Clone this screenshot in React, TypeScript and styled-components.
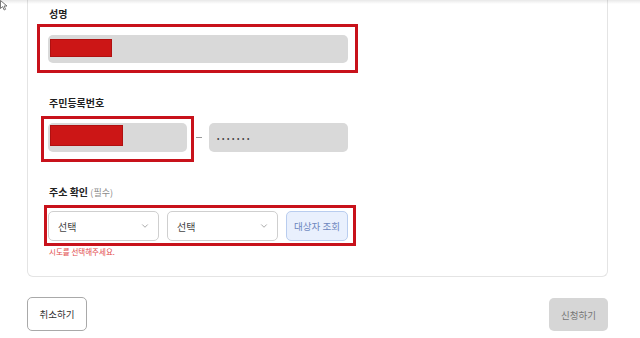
import styled, { createGlobalStyle } from "styled-components";
import { ChevronDown } from "lucide-react";

const GlobalStyle = createGlobalStyle`
  body {
    margin: 0;
    background: #fff;
    font-family: "Noto Sans CJK KR", "Noto Sans", sans-serif;
    color: #222;
  }
`;

const Page = styled.div`
  position: relative;
  width: 640px;
  height: 338px;
  overflow: hidden;
  padding: 0 32px 0 27px;
  box-sizing: border-box;
`;

const TopShade = styled.div`
  position: absolute;
  top: 0;
  left: 0;
  right: 0;
  height: 4px;
  background: linear-gradient(rgba(0, 0, 0, 0.09), rgba(0, 0, 0, 0));
`;

const Cursor = styled.svg`
  position: absolute;
  top: 0;
  left: 0;
`;

const Card = styled.section`
  border: 1px solid #e4e4e4;
  border-top: none;
  border-radius: 0 0 6px 6px;
  padding: 7px 20px 19px 20px;
`;

const Label = styled.div`
  font-size: 10px;
  font-weight: 700;
  line-height: 14px;
  padding-left: 1px;
  color: #222;
  span {
    font-weight: 400;
    font-size: 9px;
    color: #8a8a8a;
  }
`;

const Highlight = styled.div<{ $pad: string; $ml: number; $mt: number }>`
  display: flex;
  border: 3px solid #c8121b;
  padding: ${(p) => p.$pad};
  margin-left: ${(p) => p.$ml}px;
  margin-top: ${(p) => p.$mt}px;
  gap: 8px;
  width: fit-content;
`;

const GrayInput = styled.div<{ $w: number; $h: number }>`
  width: ${(p) => p.$w}px;
  height: ${(p) => p.$h}px;
  background: #d9d9d9;
  border-radius: 5px;
  display: flex;
  align-items: flex-start;
  padding-left: 2px;
  box-sizing: border-box;
  flex-shrink: 0;
`;

const Redact = styled.div<{ $w: number; $h: number; $t: number }>`
  width: ${(p) => p.$w}px;
  height: ${(p) => p.$h}px;
  margin-top: ${(p) => p.$t}px;
  background: #cc1616;
  box-shadow: inset 0 0 0 1px #b01010;
`;

const Row = styled.div`
  display: flex;
  align-items: flex-start;
  margin-top: 6px;
`;

const Dash = styled.div`
  width: 15px;
  height: 1px;
  margin-top: 21px;
  display: flex;
  &::before {
    content: "";
    margin-left: 2px;
    width: 6px;
    height: 1px;
    background: #999;
  }
`;

const Masked = styled(GrayInput)`
  margin-top: 7px;
  align-items: center;
  padding-left: 8px;
  font-size: 7px;
  letter-spacing: 2.6px;
  color: #444;
`;

const Select = styled.div`
  width: 111px;
  height: 30px;
  box-sizing: border-box;
  border: 1px solid #cfcfcf;
  border-radius: 5px;
  background: #fff;
  display: flex;
  align-items: center;
  justify-content: space-between;
  padding: 0 8px 0 9px;
  font-size: 10px;
  color: #444;
`;

const LookupButton = styled.button`
  width: 62px;
  height: 30px;
  box-sizing: border-box;
  border: 1px solid #b9cdef;
  border-radius: 5px;
  background: #e9f0fd;
  color: #6d87bd;
  font-family: inherit;
  font-size: 9.5px;
  padding: 0;
`;

const ErrorText = styled.div`
  margin-top: 1px;
  padding-left: 1px;
  font-size: 7.5px;
  line-height: 10px;
  color: #e24a4a;
`;

const Actions = styled.div`
  display: flex;
  justify-content: space-between;
  align-items: center;
  margin-top: 20px;
`;

const ActionButton = styled.button<{ $primary?: boolean }>`
  height: ${(p) => (p.$primary ? 33 : 34)}px;
  width: ${(p) => (p.$primary ? 59 : 60)}px;
  box-sizing: border-box;
  border-radius: 5px;
  border: ${(p) => (p.$primary ? "none" : "1px solid #a9a9a9")};
  background: ${(p) => (p.$primary ? "#d6d6d6" : "#fff")};
  color: ${(p) => (p.$primary ? "#777" : "#333")};
  font-family: inherit;
  font-size: 9.5px;
  padding: 0;
  margin-top: ${(p) => (p.$primary ? 1 : 0)}px;
`;

const Spacer = styled.div<{ $h: number }>`
  height: ${(p) => p.$h}px;
`;

const App = () => {
  return (
    <Page>
      <GlobalStyle />
      <Card>
        <Label>성명</Label>
        <Highlight $pad="8px 7px 7px 8px" $ml={-11} $mt={3}>
          <GrayInput $w={300} $h={28}>
            <Redact $w={62} $h={18} $t={4} />
          </GrayInput>
        </Highlight>
        <Spacer $h={23} />
        <Label>주민등록번호</Label>
        <Row>
          <Highlight $pad="4px 4px 7px 4px" $ml={-7} $mt={0}>
            <GrayInput $w={139} $h={29}>
              <Redact $w={73} $h={21} $t={2} />
            </GrayInput>
          </Highlight>
          <Dash />
          <Masked $w={139} $h={29}>•••••••</Masked>
        </Row>
        <Spacer $h={23} />
        <Label>
          주소 확인 <span>(필수)</span>
        </Label>
        <Highlight $pad="3px 5px 2px 1px" $ml={-4} $mt={5}>
          <Select>
            선택
            <ChevronDown size={10} color="#777" strokeWidth={1.5} />
          </Select>
          <Select>
            선택
            <ChevronDown size={10} color="#777" strokeWidth={1.5} />
          </Select>
          <LookupButton>대상자 조회</LookupButton>
        </Highlight>
        <ErrorText>시도를 선택해주세요.</ErrorText>
      </Card>
      <Actions>
        <ActionButton>취소하기</ActionButton>
        <ActionButton $primary>신청하기</ActionButton>
      </Actions>
      <TopShade />
      <Cursor width="9" height="11" viewBox="0 0 9 11">
        <path d="M0.5 0.5 L0.5 8.5 L2.6 6.6 L4.2 10 L5.6 9.3 L4.1 6 L7 6 Z" fill="#fff" stroke="#555" strokeWidth="0.8" />
      </Cursor>
    </Page>
  );
};

export default App;
